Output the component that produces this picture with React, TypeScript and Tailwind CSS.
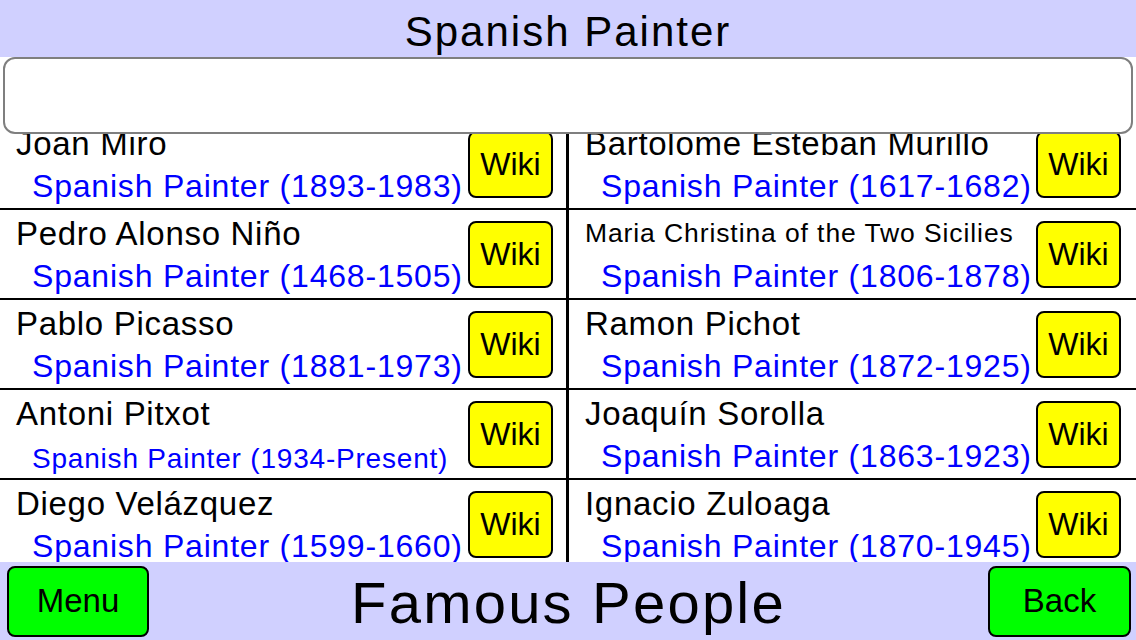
const people = [
  { name: "Joan Miro", years: "1893-1983" },
  { name: "Bartolome Esteban Murillo", years: "1617-1682" },
  { name: "Pedro Alonso Niño", years: "1468-1505" },
  { name: "Maria Christina of the Two Sicilies", years: "1806-1878", smallName: true },
  { name: "Pablo Picasso", years: "1881-1973" },
  { name: "Ramon Pichot", years: "1872-1925" },
  { name: "Antoni Pitxot", years: "1934-Present", smallYears: true },
  { name: "Joaquín Sorolla", years: "1863-1923" },
  { name: "Diego Velázquez", years: "1599-1660" },
  { name: "Ignacio Zuloaga", years: "1870-1945" },
];

type Person = (typeof people)[number] & { smallName?: boolean; smallYears?: boolean };

const Cell = ({ p, left }: { p: Person; left: boolean }) => (
  <div
    className={`flex h-[90px] items-center border-b-2 border-black ${
      left ? "border-r-[3px] pr-[13px]" : "pr-[15px]"
    }`}
  >
    <div className="flex h-full min-w-0 flex-1 flex-col pt-[7px]">
      <div
        className={`whitespace-nowrap pl-4 leading-[33px] text-black ${
          p.smallName ? "text-[26.5px] tracking-[0.9px]" : "text-[33px] tracking-[0.7px]"
        }`}
      >
        {p.name}
      </div>
      <div
        className={`mt-[10px] whitespace-nowrap pl-8 leading-[32px] text-[#0000ff] ${
          p.smallYears ? "pt-[3px] text-[28px] tracking-[0.8px]" : "text-[32px] tracking-[0.8px]"
        }`}
      >
        Spanish Painter ({p.years})
      </div>
    </div>
    <button className="flex h-[67px] w-[85px] shrink-0 items-center justify-center rounded-lg border-2 border-black bg-[#ffff00] text-[32px] leading-none text-black">
      Wiki
    </button>
  </div>
);

export default function App() {
  return (
    <div className="flex h-[640px] w-[1136px] flex-col overflow-hidden bg-white font-['Liberation_Sans',Arial,sans-serif]">
      <header className="flex h-[57px] shrink-0 items-center justify-center bg-[#d0d0ff] pt-[6px]">
        <h1 className="text-[42px] leading-none tracking-[2px] text-black">Spanish Painter</h1>
      </header>

      <div className="relative z-10 mx-[3px] h-[77px] shrink-0 rounded-xl border-2 border-[#7f7f7f] bg-white" />

      <div className="h-[428px] shrink-0 overflow-hidden">
        <div className="-mt-[14px] grid grid-cols-[569px_1fr]">
          {people.map((p, i) => (
            <Cell key={p.name} p={p} left={i % 2 === 0} />
          ))}
        </div>
      </div>

      <footer className="flex h-[78px] shrink-0 items-center justify-between bg-[#d0d0ff] pl-[7px] pr-[5px]">
        <button className="h-[71px] w-[142px] rounded-lg border-2 border-black bg-[#00ff00] text-[33px] text-black">
          Menu
        </button>
        <div className="pt-[4px] text-[58px] leading-none tracking-[2.2px] text-black">Famous People</div>
        <button className="h-[71px] w-[143px] rounded-lg border-2 border-black bg-[#00ff00] text-[33px] text-black">
          Back
        </button>
      </footer>
    </div>
  );
}
